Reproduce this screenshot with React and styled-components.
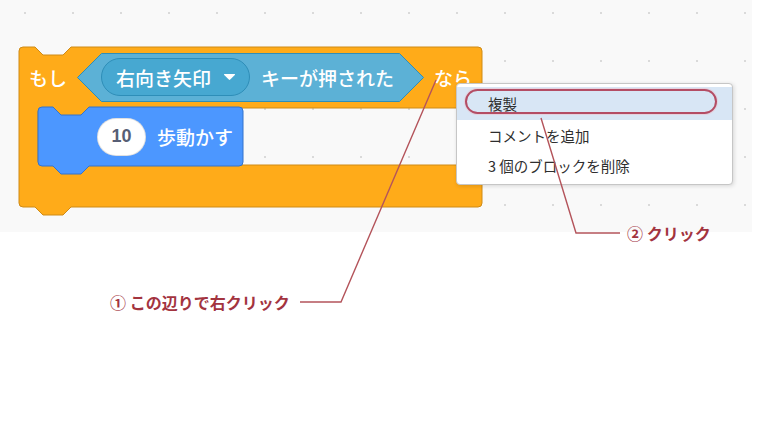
import React from 'react'
import styled, { createGlobalStyle } from 'styled-components'

const GlobalStyle = createGlobalStyle`
  html, body {
    margin: 0;
    padding: 0;
    background: #fff;
  }
  body {
    font-family: "Noto Sans CJK JP", "Noto Sans", sans-serif;
  }
`

const Page = styled.div`
  position: relative;
  width: 760px;
  height: 428px;
  overflow: hidden;
`

// scratch workspace with its dot grid
const Workspace = styled.div`
  position: relative;
  width: 752px;
  height: 232px;
  background-color: #f9f9f9;
  background-image: radial-gradient(circle, #dadada 1px, transparent 1.5px);
  background-size: 48px 48px;
  background-position: 1px -11px;
`

const CBlock = styled.div`
  position: absolute;
  left: 19px;
  top: 47px;
  width: 463px;
  height: 168px;
  display: flex;
  flex-direction: column;
`

const Shape = styled.svg`
  position: absolute;
  left: 0;
  top: 0;
  overflow: visible;
`

const HeadRow = styled.div`
  position: relative;
  height: 60px;
  display: flex;
  align-items: center;
  gap: 10px;
  padding-left: 10px;
`

const Label = styled.span`
  position: relative;
  color: #fff;
  font-size: 19px;
  line-height: 1;
  font-weight: 500;
  white-space: nowrap;
`

const BoolSlot = styled.div`
  position: relative;
  flex: none;
  width: 347px;
  height: 49px;
  box-sizing: border-box;
  display: flex;
  align-items: center;
  gap: 11px;
  padding-left: 24px;
`

const Dropdown = styled.div`
  position: relative;
  flex: none;
  width: 149px;
  height: 38px;
  box-sizing: border-box;
  border-radius: 19px;
  background: #47a8d1;
  border: 1px solid #2e8eb8;
  display: flex;
  align-items: center;
  gap: 12px;
  padding-left: 14px;
`

const InnerSlot = styled.div`
  position: relative;
  padding-left: 19px;
`

const StackBlock = styled.div`
  position: relative;
  width: 205px;
  height: 59px;
  box-sizing: border-box;
  display: flex;
  align-items: center;
  gap: 11px;
  padding-left: 59px;
`

const NumberInput = styled.div`
  position: relative;
  width: 49px;
  height: 38px;
  box-sizing: border-box;
  border-radius: 19px;
  background: #fff;
  border: 1px solid rgba(0, 0, 0, 0.12);
  display: flex;
  align-items: center;
  justify-content: center;
  font-family: "Liberation Sans", "Noto Sans", sans-serif;
  font-weight: 700;
  font-size: 18px;
  color: #575e75;
`

const Menu = styled.ul`
  position: absolute;
  left: 456px;
  top: 83px;
  width: 277px;
  box-sizing: border-box;
  margin: 0;
  padding: 3px 0 4px;
  list-style: none;
  background: #fff;
  border: 1px solid #c6c6c6;
  border-radius: 4px;
  box-shadow: 1px 1px 4px rgba(0, 0, 0, 0.14);
`

const MenuItem = styled.li`
  position: relative;
  height: ${p => (p.$active ? 33 : 30)}px;
  display: flex;
  align-items: center;
  padding-left: 31px;
  font-size: 14.5px;
  color: #2e2e2e;
  background: ${p => (p.$active ? '#d8e6f5' : 'transparent')};
`

const Ring = styled.span`
  position: absolute;
  left: 8px;
  right: 15px;
  top: 2px;
  height: 25px;
  box-sizing: border-box;
  border: 2px solid #b44d64;
  border-radius: 14px;
  box-shadow: 0 0 0 1px rgba(240, 190, 200, 0.5);
`

const Overlay = styled.svg`
  position: absolute;
  left: 0;
  top: 0;
  pointer-events: none;
  z-index: 5;
`

const Callout = styled.span`
  position: absolute;
  left: ${p => p.$x}px;
  top: ${p => p.$y}px;
  color: #a3343f;
  font-size: 16px;
  line-height: 22px;
  font-weight: 700;
  white-space: nowrap;
`

const cPath =
  'M0 4 A4 4 0 0 1 4 0 L16 0 L24 8 L44 8 L52 0 L459 0 A4 4 0 0 1 463 4 L463 57 A4 4 0 0 1 459 61 ' +
  'L71 61 L63 69 L43 69 L35 61 L23 61 A4 4 0 0 0 19 65 L19 114 A4 4 0 0 0 23 118 L459 118 ' +
  'A4 4 0 0 1 463 122 L463 156 A4 4 0 0 1 459 160 L52 160 L44 168 L24 168 L16 160 L4 160 A4 4 0 0 1 0 156 Z'

const stackPath =
  'M0 4 A4 4 0 0 1 4 0 L15 0 L23 8 L43 8 L51 0 L201 0 A4 4 0 0 1 205 4 L205 55 A4 4 0 0 1 201 59 ' +
  'L51 59 L43 67 L23 67 L15 59 L4 59 A4 4 0 0 1 0 55 Z'

const Caret = () => (
  <svg width="13" height="8" viewBox="0 0 13 8" style={{ position: 'relative' }}>
    <path d="M1.5 1 L11.5 1 Q12.5 1 11.8 1.9 L7.2 6.6 Q6.5 7.3 5.8 6.6 L1.2 1.9 Q0.5 1 1.5 1 Z" fill="#fff" />
  </svg>
)

const App = () => {
  return (
    <Page>
      <GlobalStyle />
      <Workspace>
        <CBlock>
          <Shape width="463" height="168" viewBox="0 0 463 168">
            <path d={cPath} fill="#ffab19" stroke="#cf8b17" strokeWidth="1" />
          </Shape>
          <HeadRow>
            <Label>もし</Label>
            <BoolSlot>
              <Shape width="347" height="49" viewBox="0 0 347 49">
                <path d="M0.5 24.5 L24.5 0.5 L322.5 0.5 L346.5 24.5 L322.5 48.5 L24.5 48.5 Z" fill="#5cb1d6" stroke="#2e8eb8" />
              </Shape>
              <Dropdown>
                <Label>右向き矢印</Label>
                <Caret />
              </Dropdown>
              <Label>キーが押された</Label>
            </BoolSlot>
            <Label>なら</Label>
          </HeadRow>
          <InnerSlot>
            <StackBlock>
              <Shape width="205" height="67" viewBox="0 0 205 67">
                <path d={stackPath} fill="#4c97ff" stroke="#3373cc" strokeWidth="1" />
              </Shape>
              <NumberInput>10</NumberInput>
              <Label>歩動かす</Label>
            </StackBlock>
          </InnerSlot>
        </CBlock>

        <Menu>
          <MenuItem $active>
            <Ring />
            複製
          </MenuItem>
          <MenuItem>コメントを追加</MenuItem>
          <MenuItem>3 個のブロックを削除</MenuItem>
        </Menu>
      </Workspace>

      <Overlay width="760" height="428" viewBox="0 0 760 428">
        <polyline points="436,80 341,302 300,302" fill="none" stroke="#b4545b" strokeWidth="1.4" />
        <polyline points="541,118 576,233 620,233" fill="none" stroke="#b4545b" strokeWidth="1.4" />
      </Overlay>
      <Callout $x={110} $y={291}>① この辺りで右クリック</Callout>
      <Callout $x={627} $y={222}>② クリック</Callout>
    </Page>
  )
}

export default App
